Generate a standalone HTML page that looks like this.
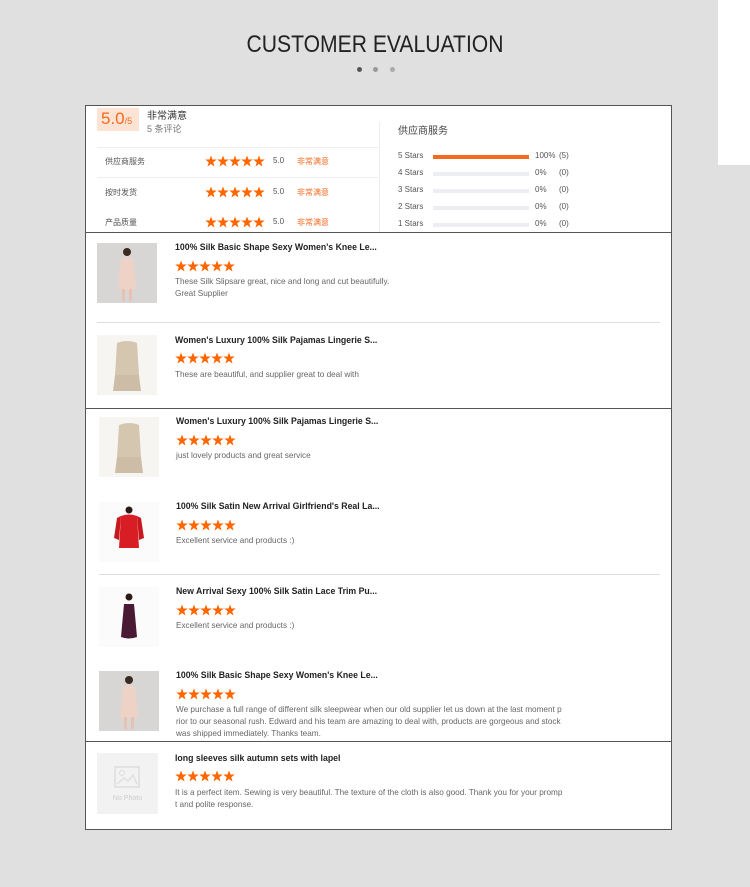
<!DOCTYPE html>
<html><head><meta charset="utf-8"><style>
*{margin:0;padding:0;box-sizing:border-box}
body{width:750px;height:887px;background:#e0e0e0;position:relative;overflow:hidden;font-family:"Liberation Sans","Noto Sans CJK SC",sans-serif}
.a{position:absolute;white-space:nowrap}
.sec{position:absolute;left:85px;width:587px;background:#fff;border:1px solid #555}
.t{font-size:9px;font-weight:bold;color:#222;transform:scaleX(0.97);transform-origin:left}
.x{font-size:8.2px;color:#666;line-height:12px}
.g{font-size:8px;color:#555}
.o{color:#f46a1e}
.bar{position:absolute;left:433px;width:96px;height:4px;background:#eceef2}
</style></head><body>
<svg width="0" height="0" style="position:absolute"><defs>
<symbol id="s" viewBox="0 0 24 24"><polygon points="12,1 15,9 23.5,9 16.5,14.5 19,23 12,18 5,23 7.5,14.5 0.5,9 9,9" fill="#ff6600"/></symbol>
<symbol id="st" viewBox="0 0 60 12"><use href="#s" x="0" width="12" height="12"/><use href="#s" x="12" width="12" height="12"/><use href="#s" x="24" width="12" height="12"/><use href="#s" x="36" width="12" height="12"/><use href="#s" x="48" width="12" height="12"/></symbol>
<symbol id="p1" viewBox="0 0 60 60"><rect width="60" height="60" fill="#d8d6d4"/><circle cx="30" cy="9" r="4" fill="#3a2a22"/><path d="M24 16 Q30 13 36 16 L39 46 Q30 49 21 46Z" fill="#efd2c6"/><rect x="25" y="46" width="3" height="12" fill="#e6c2b2"/><rect x="32" y="46" width="3" height="12" fill="#e6c2b2"/></symbol>
<symbol id="p2" viewBox="0 0 60 60"><rect width="60" height="60" fill="#f7f5f2"/><path d="M20 8 Q30 4 40 8 L42 40 L18 40Z" fill="#d5c6b0"/><path d="M18 40 L42 40 L44 56 L16 56Z" fill="#cdbda6"/></symbol>
<symbol id="p3" viewBox="0 0 60 60"><rect width="60" height="60" fill="#fbfbfb"/><circle cx="30" cy="8" r="3.5" fill="#2a1a14"/><path d="M22 14 Q30 11 38 14 L40 46 L20 46Z" fill="#d81e24"/><path d="M18 16 L22 14 L20 38 L15 36Z M42 16 L38 14 L40 38 L45 36Z" fill="#c8181e"/></symbol>
<symbol id="p4" viewBox="0 0 60 60"><rect width="60" height="60" fill="#fbfbfb"/><circle cx="30" cy="10" r="3.5" fill="#2a1a14"/><path d="M25 17 L35 17 L38 50 Q30 53 22 50Z" fill="#4a1a34"/></symbol>
</defs></svg>

<div class="a" style="left:0;width:750px;top:31px;text-align:center;font-size:24px;color:#222;transform:scaleX(0.88)">CUSTOMER EVALUATION</div>
<div class="a" style="left:357px;top:67px;width:5px;height:5px;border-radius:50%;background:#555"></div>
<div class="a" style="left:373px;top:67px;width:5px;height:5px;border-radius:50%;background:#999"></div>
<div class="a" style="left:390px;top:67px;width:5px;height:5px;border-radius:50%;background:#aaa"></div>
<div class="a" style="left:718px;top:0;width:32px;height:165px;background:#fff"></div>

<!-- Section 1 -->
<div class="sec" style="top:105px;height:128px"></div>
<div class="a" style="left:97px;top:108px;width:42px;height:23px;background:#fde3d3"></div>
<div class="a o" style="left:101px;top:109px;font-size:17px">5.0<span style="font-size:9px">/5</span></div>
<div class="a" style="left:147px;top:107px;font-size:10px;color:#333">非常满意</div>
<div class="a" style="left:147px;top:122px;font-size:9px;color:#777">5 条评论</div>
<div class="a" style="left:97px;top:147px;width:281px;height:1px;background:#eee"></div>
<div class="a" style="left:97px;top:177px;width:281px;height:1px;background:#eee"></div>
<div class="a" style="left:379px;top:122px;width:1px;height:110px;background:#eee"></div>
<div class="a g" style="left:105px;top:156px">供应商服务</div>
<div class="a g" style="left:105px;top:187px">按时发货</div>
<div class="a g" style="left:105px;top:217px">产品质量</div>
<svg class="a" style="left:205px;top:155px" width="60" height="12"><use href="#st"/></svg>
<svg class="a" style="left:205px;top:186px" width="60" height="12"><use href="#st"/></svg>
<svg class="a" style="left:205px;top:216px" width="60" height="12"><use href="#st"/></svg>
<div class="a g" style="left:273px;top:156px">5.0</div>
<div class="a g" style="left:273px;top:187px">5.0</div>
<div class="a g" style="left:273px;top:217px">5.0</div>
<div class="a g o" style="left:297px;top:156px">非常满意</div>
<div class="a g o" style="left:297px;top:187px">非常满意</div>
<div class="a g o" style="left:297px;top:217px">非常满意</div>
<div class="a" style="left:398px;top:122px;font-size:10px;color:#444">供应商服务</div>
<div class="a g" style="left:398px;top:151px">5 Stars</div>
<div class="a g" style="left:398px;top:168px">4 Stars</div>
<div class="a g" style="left:398px;top:185px">3 Stars</div>
<div class="a g" style="left:398px;top:202px">2 Stars</div>
<div class="a g" style="left:398px;top:219px">1 Stars</div>
<div class="bar" style="top:155px;background:#f46a1e"></div>
<div class="bar" style="top:172px"></div><div class="bar" style="top:189px"></div><div class="bar" style="top:206px"></div><div class="bar" style="top:223px"></div>
<div class="a g" style="left:535px;top:151px">100%</div><div class="a g" style="left:559px;top:151px">(5)</div>
<div class="a g" style="left:535px;top:168px">0%</div><div class="a g" style="left:559px;top:168px">(0)</div>
<div class="a g" style="left:535px;top:185px">0%</div><div class="a g" style="left:559px;top:185px">(0)</div>
<div class="a g" style="left:535px;top:202px">0%</div><div class="a g" style="left:559px;top:202px">(0)</div>
<div class="a g" style="left:535px;top:219px">0%</div><div class="a g" style="left:559px;top:219px">(0)</div>

<!-- Section 2 -->
<div class="sec" style="top:232px;height:177px"></div>
<svg class="a" style="left:97px;top:243px" width="60" height="60"><use href="#p1"/></svg>
<div class="a t" style="left:175px;top:242px">100% Silk Basic Shape Sexy Women's Knee Le...</div>
<svg class="a" style="left:175px;top:260px" width="60" height="12"><use href="#st"/></svg>
<div class="a x" style="left:175px;top:276px">These Silk Slipsare great, nice and long and cut beautifully.<br>Great Supplier</div>
<div class="a" style="left:97px;top:322px;width:563px;height:1px;background:#ddd"></div>
<svg class="a" style="left:97px;top:335px" width="60" height="60"><use href="#p2"/></svg>
<div class="a t" style="left:175px;top:335px">Women's Luxury 100% Silk Pajamas Lingerie S...</div>
<svg class="a" style="left:175px;top:352px" width="60" height="12"><use href="#st"/></svg>
<div class="a x" style="left:175px;top:369px">These are beautiful, and supplier great to deal with</div>

<!-- Section 3 -->
<div class="sec" style="top:408px;height:334px"></div>
<svg class="a" style="left:99px;top:417px" width="60" height="60"><use href="#p2"/></svg>
<div class="a t" style="left:176px;top:416px">Women's Luxury 100% Silk Pajamas Lingerie S...</div>
<svg class="a" style="left:176px;top:434px" width="60" height="12"><use href="#st"/></svg>
<div class="a x" style="left:176px;top:450px">just lovely products and great service</div>
<svg class="a" style="left:99px;top:502px" width="60" height="60"><use href="#p3"/></svg>
<div class="a t" style="left:176px;top:501px">100% Silk Satin New Arrival Girlfriend's Real La...</div>
<svg class="a" style="left:176px;top:519px" width="60" height="12"><use href="#st"/></svg>
<div class="a x" style="left:176px;top:535px">Excellent service and products :)</div>
<div class="a" style="left:99px;top:574px;width:561px;height:1px;background:#ddd"></div>
<svg class="a" style="left:99px;top:587px" width="60" height="60"><use href="#p4"/></svg>
<div class="a t" style="left:176px;top:586px">New Arrival Sexy 100% Silk Satin Lace Trim Pu...</div>
<svg class="a" style="left:176px;top:604px" width="60" height="12"><use href="#st"/></svg>
<div class="a x" style="left:176px;top:620px">Excellent service and products :)</div>
<svg class="a" style="left:99px;top:671px" width="60" height="60"><use href="#p1"/></svg>
<div class="a t" style="left:176px;top:670px">100% Silk Basic Shape Sexy Women's Knee Le...</div>
<svg class="a" style="left:176px;top:688px" width="60" height="12"><use href="#st"/></svg>
<div class="a x" style="left:176px;top:704px">We purchase a full range of different silk sleepwear when our old supplier let us down at the last moment p<br>rior to our seasonal rush. Edward and his team are amazing to deal with, products are gorgeous and stock<br>was shipped immediately. Thanks team.</div>

<!-- Section 4 -->
<div class="sec" style="top:741px;height:89px"></div>
<div class="a" style="left:97px;top:753px;width:61px;height:61px;background:#f2f2f2"></div>
<svg class="a" style="left:114px;top:766px" width="26" height="22"><rect x="1" y="1" width="24" height="20" fill="none" stroke="#ddd" stroke-width="1.5"/><circle cx="8" cy="7" r="2.5" fill="none" stroke="#ddd"/><path d="M3 18 L10 12 L14 15 L19 9 L23 18" fill="none" stroke="#ddd" stroke-width="1.3"/></svg>
<div class="a" style="left:97px;top:795px;width:61px;text-align:center;font-size:7px;color:#ccc">No Photo</div>
<div class="a t" style="left:175px;top:753px">long sleeves silk autumn sets with lapel</div>
<svg class="a" style="left:175px;top:770px" width="60" height="12"><use href="#st"/></svg>
<div class="a x" style="left:175px;top:787px">It is a perfect item. Sewing is very beautiful. The texture of the cloth is also good. Thank you for your promp<br>t and polite response.</div>
</body></html>
